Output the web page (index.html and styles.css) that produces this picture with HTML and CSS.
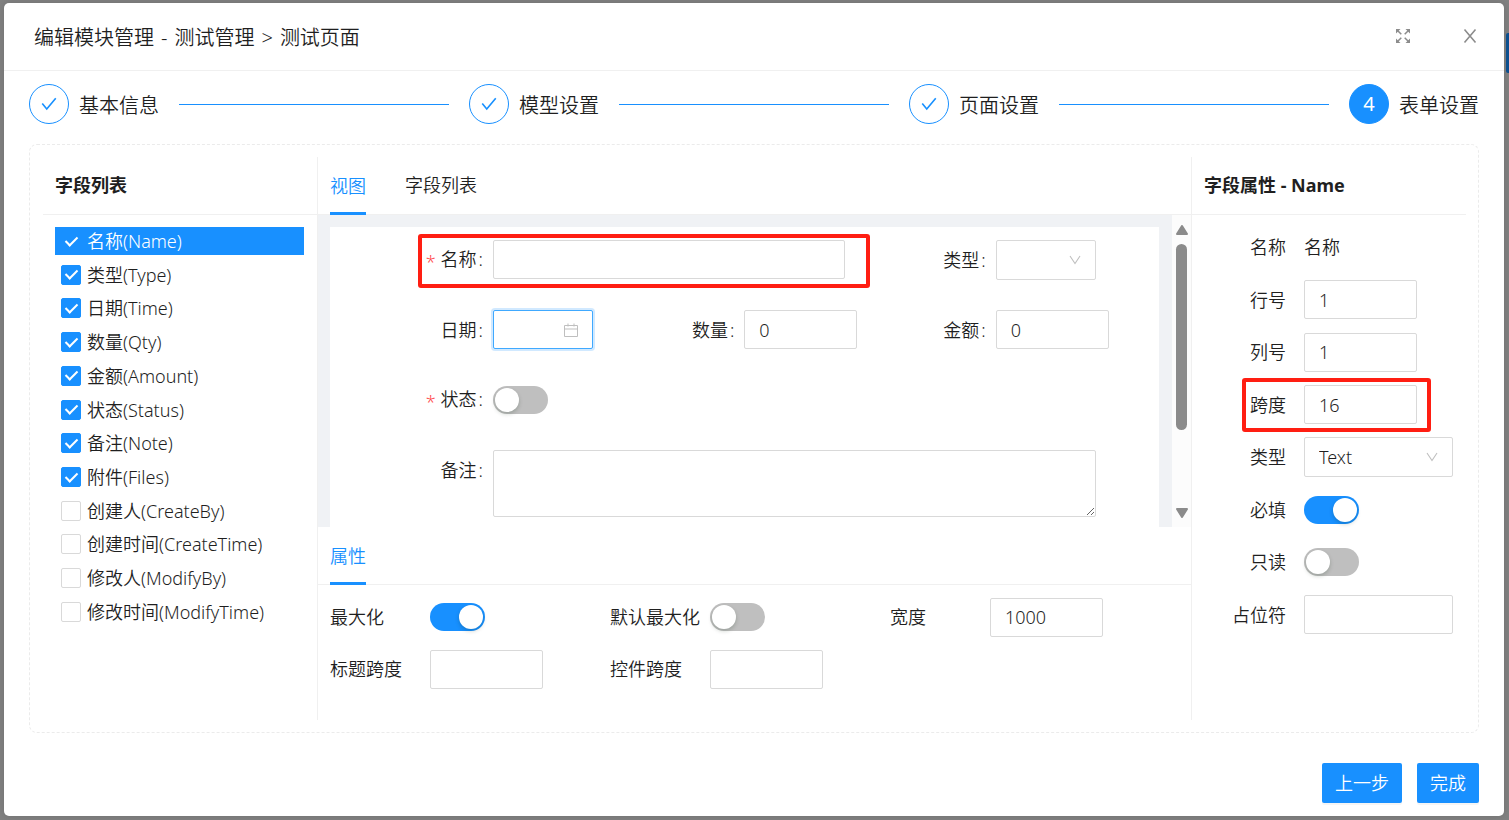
FILE: index.html
```
<!DOCTYPE html>
<html lang="zh-CN">
<head>
<meta charset="utf-8">
<title>编辑模块管理</title>
<link rel="stylesheet" href="styles.css">
</head>
<body>
<svg class="sprite" aria-hidden="true">
  <symbol id="check" viewBox="0 0 20 20"><path d="M2.5 9.5 L7.5 15.5 L17.5 3.5" fill="none" stroke="currentColor" stroke-width="1.8"/></symbol>
  <symbol id="down" viewBox="0 0 12 12"><path d="M1 2 L6 9.5 L11 2" fill="none" stroke="currentColor" stroke-width="1.1"/></symbol>
</svg>
<div class="page-action"></div>
<main class="modal" role="dialog" aria-labelledby="title">
  <header class="modal-header">
    <h1 class="modal-title" id="title"><span>编辑模块管理</span><span>-</span><span>测试管理</span><span>&gt;</span><span>测试页面</span></h1>
    <div class="modal-tools">
      <button class="icon-btn" type="button" aria-label="全屏">
        <svg width="16" height="16" viewBox="0 0 16 16"><g fill="none" stroke="currentColor" stroke-width="1.5"><path d="M2 2 L6.3 6.3 M14 2 L9.7 6.3 M2 14 L6.3 9.7 M14 14 L9.7 9.7"/></g><path fill="currentColor" d="M1 1h4.5L1 5.5zM15 1v4.5L10.500 1zM1 15v-4.500L5.500 15zM15 15h-4.500L15 10.500z"/></svg>
      </button>
      <button class="icon-btn" type="button" aria-label="关闭">
        <svg width="16" height="16" viewBox="0 0 16 16"><path d="M2.500 1.500 L13.500 14.500 M13.500 1.500 L2.500 14.500" fill="none" stroke="currentColor" stroke-width="1.600"/></svg>
      </button>
    </div>
  </header>
  <div class="modal-body">
    <ol class="steps">
      <li class="step"><span class="step-icon"><svg width="18" height="18"><use href="#check"/></svg></span><span class="step-name">基本信息</span></li>
      <li class="step"><span class="step-icon"><svg width="18" height="18"><use href="#check"/></svg></span><span class="step-name">模型设置</span></li>
      <li class="step"><span class="step-icon"><svg width="18" height="18"><use href="#check"/></svg></span><span class="step-name">页面设置</span></li>
      <li class="step current"><span class="step-icon">4</span><span class="step-name">表单设置</span></li>
    </ol>
    <div class="panel">
      <section class="fields">
        <h2 class="bar heading">字段列表</h2>
        <ul class="field-list">
          <li><label class="field-item active"><input class="tick" type="checkbox" checked>名称(Name)</label></li>
          <li><label class="field-item"><input class="tick" type="checkbox" checked>类型(Type)</label></li>
          <li><label class="field-item"><input class="tick" type="checkbox" checked>日期(Time)</label></li>
          <li><label class="field-item"><input class="tick" type="checkbox" checked>数量(Qty)</label></li>
          <li><label class="field-item"><input class="tick" type="checkbox" checked>金额(Amount)</label></li>
          <li><label class="field-item"><input class="tick" type="checkbox" checked>状态(Status)</label></li>
          <li><label class="field-item"><input class="tick" type="checkbox" checked>备注(Note)</label></li>
          <li><label class="field-item"><input class="tick" type="checkbox" checked>附件(Files)</label></li>
          <li><label class="field-item"><input class="tick" type="checkbox">创建人(CreateBy)</label></li>
          <li><label class="field-item"><input class="tick" type="checkbox">创建时间(CreateTime)</label></li>
          <li><label class="field-item"><input class="tick" type="checkbox">修改人(ModifyBy)</label></li>
          <li><label class="field-item"><input class="tick" type="checkbox">修改时间(ModifyTime)</label></li>
        </ul>
      </section>
      <section class="designer">
        <div class="bar tabs"><button class="tab on" type="button">视图</button><button class="tab" type="button">字段列表</button></div>
        <div class="preview">
          <div class="canvas">
            <form class="form">
              <div class="row wide2 marked">
                <label class="label required" for="f-name">名称</label><input class="box" id="f-name" type="text">
              </div>
              <div class="row">
                <label class="label" for="f-type">类型</label>
                <span class="with-icon"><select class="box" id="f-type"><option></option></select><svg class="caret" width="12" height="12"><use href="#down"/></svg></span>
              </div>
              <div class="row">
                <label class="label" for="f-date">日期</label>
                <span class="with-icon"><input class="box focus" id="f-date" type="text"><svg class="caret" width="14" height="14" viewBox="0 0 14 14"><path d="M.5 2.500h13v11H.500zM.500 6h13M4 .500v3M10 .500v3" fill="none" stroke="currentColor"/></svg></span>
              </div>
              <div class="row"><label class="label" for="f-qty">数量</label><input class="box number" id="f-qty" type="text" value="0"></div>
              <div class="row"><label class="label" for="f-amount">金额</label><input class="box number" id="f-amount" type="text" value="0"></div>
              <div class="row wide3"><label class="label required" for="f-status">状态</label><input class="switch" id="f-status" type="checkbox" role="switch"></div>
              <div class="row wide3"><label class="label" for="f-note">备注</label><textarea class="box area" id="f-note"></textarea></div>
            </form>
          </div>
          <div class="scrollbar" aria-hidden="true">
            <svg width="12" height="10" viewBox="0 0 12 10"><path d="M6 1 L11 9 H1z" fill="#8b8b8b" stroke="#8b8b8b" stroke-width="2" stroke-linejoin="round"/></svg>
            <div class="track"><div class="thumb"></div></div>
            <svg width="12" height="10" viewBox="0 0 12 10"><path d="M6 9 L11 1 H1z" fill="#8b8b8b" stroke="#8b8b8b" stroke-width="2" stroke-linejoin="round"/></svg>
          </div>
        </div>
        <div class="bar tabs"><button class="tab on" type="button">属性</button></div>
        <form class="props">
          <div class="prop"><label for="p-max">最大化</label><input class="switch" id="p-max" type="checkbox" role="switch" checked></div>
          <div class="prop"><label for="p-defmax">默认最大化</label><input class="switch" id="p-defmax" type="checkbox" role="switch"></div>
          <div class="prop"><label for="p-width">宽度</label><input class="box number" id="p-width" type="text" value="1000"></div>
          <div class="prop"><label for="p-lspan">标题跨度</label><input class="box number" id="p-lspan" type="text"></div>
          <div class="prop"><label for="p-cspan">控件跨度</label><input class="box number" id="p-cspan" type="text"></div>
        </form>
      </section>
      <section class="attrs">
        <h2 class="bar heading">字段属性 - Name</h2>
        <form class="attr-list">
          <div class="attr"><span class="attr-label">名称</span><span>名称</span></div>
          <div class="attr"><label class="attr-label" for="a-row">行号</label><input class="box number" id="a-row" type="text" value="1"></div>
          <div class="attr"><label class="attr-label" for="a-col">列号</label><input class="box number" id="a-col" type="text" value="1"></div>
          <div class="attr marked"><label class="attr-label" for="a-span">跨度</label><input class="box number" id="a-span" type="text" value="16"></div>
          <div class="attr"><label class="attr-label" for="a-type">类型</label><span class="with-icon"><select class="box" id="a-type"><option>Text</option></select><svg class="caret" width="12" height="12"><use href="#down"/></svg></span></div>
          <div class="attr"><label class="attr-label" for="a-req">必填</label><input class="switch" id="a-req" type="checkbox" role="switch" checked></div>
          <div class="attr"><label class="attr-label" for="a-ro">只读</label><input class="switch" id="a-ro" type="checkbox" role="switch"></div>
          <div class="attr"><label class="attr-label" for="a-ph">占位符</label><input class="box" id="a-ph" type="text"></div>
        </form>
      </section>
    </div>
    <footer class="actions"><button class="primary" type="button">上一步</button><button class="primary" type="button">完成</button></footer>
  </div>
</main>
</body>
</html>
```
FILE: styles.css
```
*, ::before, ::after { box-sizing: border-box; }
body {
  margin: 0;
  min-height: 100vh;
  padding: 3px 5px 4px 4px;
  display: flex;
  background: #828282;
  color: #1f1f1f;
  font: 350 18px/28px "Noto Sans", "Noto Sans CJK SC", sans-serif;
}
h1, h2, ol, ul { margin: 0; padding: 0; list-style: none; font-weight: inherit; }
button, input, select, textarea { font: inherit; color: inherit; margin: 0; }
button { border: 0; background: none; padding: 0; }
.sprite { position: absolute; width: 0; height: 0; }
.page-action { position: absolute; right: 0; top: 33px; width: 3px; height: 40px; background: #0c4f8e; border-radius: 2px 0 0 2px; }

.modal { flex: 1; min-width: 0; display: flex; flex-direction: column; background: #fff; border-radius: 5px; box-shadow: 0 0 8px rgba(0, 0, 0, .15); }
.modal-header { height: 68px; padding: 0 26px 0 30px; display: flex; align-items: center; justify-content: space-between; border-bottom: 1px solid #f0f0f0; }
.modal-title { display: flex; gap: 7px; padding-top: 2px; font-size: 20px; }
.modal-tools { display: flex; gap: 51px; padding-bottom: 2px; color: #8c8c8c; }
.icon-btn { display: flex; }
.modal-body { flex: 1; display: flex; flex-direction: column; padding: 13px 25px; }

.steps { display: flex; font-size: 20px; }
.step { flex: 1; display: flex; align-items: center; gap: 10px; }
.step::after { content: ""; flex: 1; height: 1px; margin: 0 20px 0 10px; background: #1890ff; }
.step.current { flex: none; }
.step.current::after { display: none; }
.step-icon { width: 40px; height: 40px; display: flex; align-items: center; justify-content: center; border: 1px solid #1890ff; border-radius: 50%; color: #1890ff; font-weight: 400; }
.step-name { padding-top: 3px; }
.current .step-icon { background: #1890ff; color: #fff; }

.panel { flex: 1; margin: 20px 0 30px; padding: 12px 12px 12px 13px; display: flex; border: 1px dashed #ebebeb; border-radius: 8px; }
.bar { height: 58px; flex: none; padding: 0 12px; border-bottom: 1px solid #f0f0f0; line-height: 57px; }
.heading { font-size: 18px; font-weight: 700; }
.fields, .designer, .attrs { display: flex; flex-direction: column; }
.fields { flex: 0 0 275px; border-right: 1px solid #f0f0f0; }
.designer { flex: 1; min-width: 0; }
.attrs { flex: 0 0 275px; border-left: 1px solid #f0f0f0; }

.field-list { flex: 1; padding: 12px 13px 94px 12px; display: flex; flex-direction: column; justify-content: space-between; }
.field-item { display: flex; align-items: center; gap: 6px; padding-left: 6px; }
.field-item.active { background: #1890ff; color: #fff; }
.tick { appearance: none; flex: none; display: grid; place-items: center; width: 20px; height: 20px; border: 1px solid #d9d9d9; border-radius: 2px; background: #fff; }
.tick:checked { background: #1890ff; border-color: #1890ff; }
.tick:checked::after { content: ""; width: 7px; height: 12px; margin-bottom: 3px; border: solid #fff; border-width: 0 2px 2px 0; transform: rotate(45deg); }

.tabs { display: flex; gap: 39px; }
.tab { line-height: 57px; }
.tab.on { height: 58px; color: #1890ff; box-shadow: inset 0 -3px #1890ff; }

.preview { height: 312px; display: flex; }
.canvas { flex: 1; min-width: 0; padding: 12px 13px 0 12px; background: #f0f2f5; overflow: hidden; }
.form { height: 100%; padding: 13px 63px 0 12px; background: #fff; display: grid; grid-template-columns: repeat(3, minmax(0, 1fr)); grid-auto-rows: 39px; row-gap: 31px; }
.row { display: flex; align-items: center; gap: 9px; }
.wide2 { grid-column: span 2; }
.wide3 { grid-column: span 3; }
.label { flex: 0 0 142px; text-align: right; }
.label::after { content: ":"; margin: 0 1px 0 2px; }
.required::before { content: "*"; display: inline-block; height: 26px; margin-right: 5px; vertical-align: middle; color: #ff4d4f; }
.marked { position: relative; }
.marked::after { content: ""; position: absolute; border: 4px solid #ff1e12; border-radius: 3px; pointer-events: none; }
.row.marked::after { inset: -6px -25px -9px 76px; }
.attr.marked::after { inset: -7px 22px -7px 50px; }

.box { flex: 1; min-width: 0; width: 100%; height: 39px; padding: 0 14px; border: 1px solid #d9d9d9; border-radius: 2px; background: #fff; outline: 0; }
.box.number { flex: 0 0 113px; }
.box.focus { border-color: #40a9ff; box-shadow: 0 0 0 2px rgba(24, 144, 255, .2); }
select.box { appearance: none; height: 40px; }
.box.area { height: 67px; align-self: flex-start; }
.with-icon { position: relative; flex: 1; min-width: 0; display: flex; }
.caret { position: absolute; right: 15px; top: 0; bottom: 0; margin: auto 0; color: #bfbfbf; pointer-events: none; }
.switch { appearance: none; flex: none; width: 55px; height: 28px; padding: 2px; display: flex; border-radius: 14px; background: #bfbfbf; }
.switch::before { content: ""; width: 24px; height: 24px; border-radius: 50%; background: #fff; box-shadow: 0 2px 4px rgba(0, 35, 11, .2); }
.switch:checked { background: #1890ff; justify-content: flex-end; }

.scrollbar { width: 19px; padding: 10px 0 9px; display: flex; flex-direction: column; align-items: center; background: #fcfcfc; }
.track { flex: 1; padding: 9px 0; }
.thumb { width: 11px; height: 186px; border-radius: 6px; background: #8b8b8b; }

.props { padding: 12px; display: grid; grid-template-columns: repeat(3, 280px); grid-auto-rows: 40px; row-gap: 12px; }
.prop { display: flex; align-items: center; }
.prop label { flex: 0 0 100px; white-space: nowrap; }

.attr-list { flex: 1; padding: 12px 13px 85px 0; display: flex; flex-direction: column; justify-content: space-between; }
.attr { height: 40px; display: flex; align-items: center; gap: 18px; }
.attr-label { flex: 0 0 94px; text-align: right; }

.actions { display: flex; justify-content: flex-end; gap: 15px; }
.primary { height: 40px; padding: 0 13px; border-radius: 2px; background: #1890ff; color: #fff; box-shadow: 0 2px 0 rgba(0, 0, 0, .04); }
```
